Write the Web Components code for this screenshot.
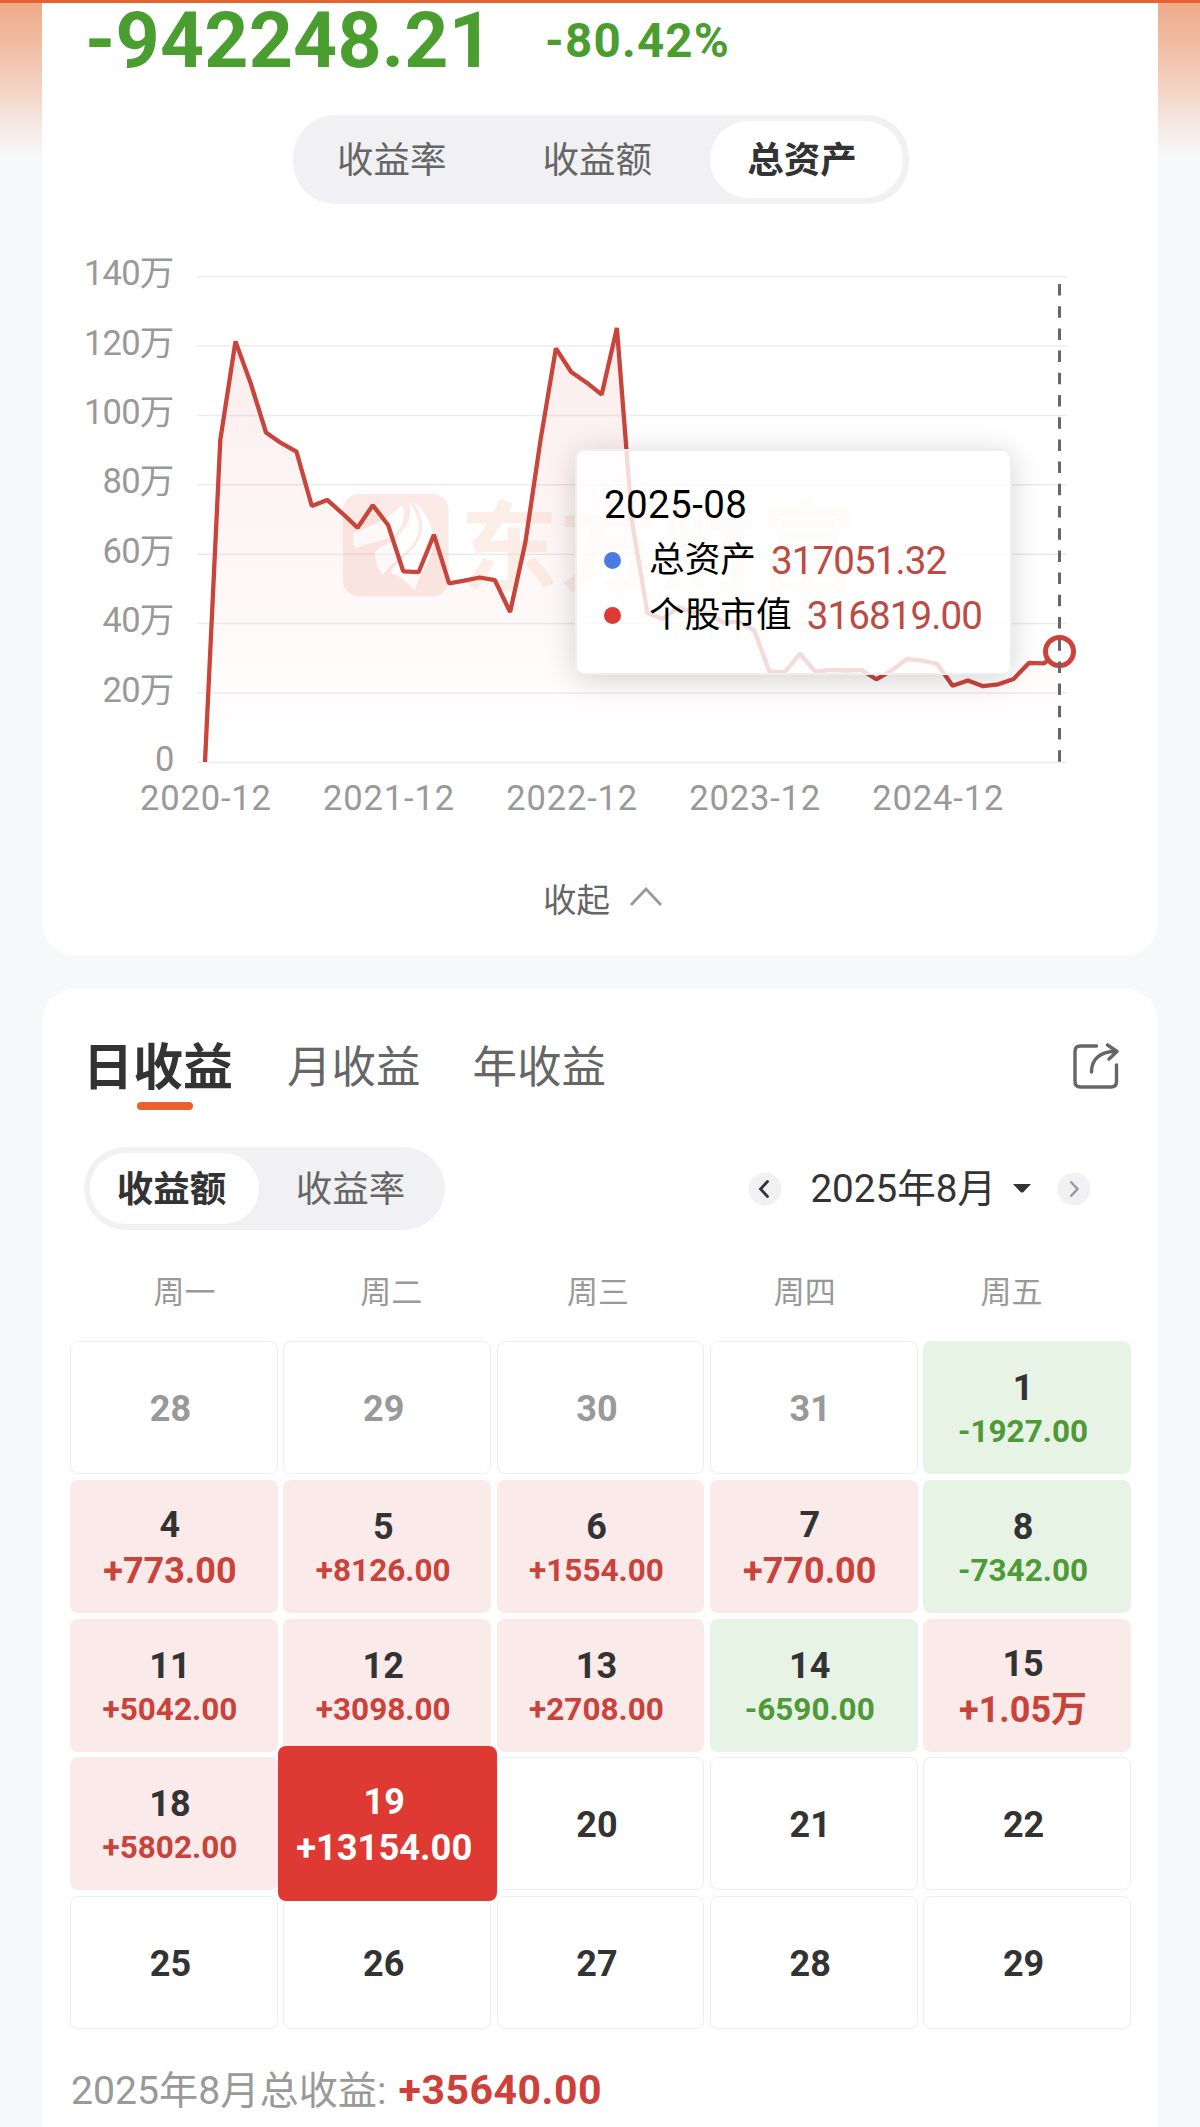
<!DOCTYPE html>
<html lang="zh-CN">
<head>
<meta charset="utf-8">
<title>收益</title>
<style>
  html, body {
    margin: 0;
    padding: 0;
  }
  body {
    height: 2127px;
    overflow: hidden;
    background: #f7f8fa;
    font-family: Roboto, "Noto Sans CJK SC", sans-serif;
    color: #333;
  }
</style>
</head>
<body>
<profit-page>
  <profit-card first>
    <profit-total amount="-942248.21" rate="-80.42%"></profit-total>
    <segment-control size="large" items="收益率,收益额,总资产" active="2"></segment-control>
    <asset-chart></asset-chart>
    <collapse-toggle>收起</collapse-toggle>
  </profit-card>
  <profit-card>
    <period-tabs></period-tabs>
    <calendar-toolbar month="2025年8月">
      <segment-control items="收益额,收益率" active="0"></segment-control>
    </calendar-toolbar>
    <profit-calendar></profit-calendar>
    <month-summary amount="+35640.00">2025年8月总收益:</month-summary>
  </profit-card>
</profit-page>

<script>
"use strict";

class ProfitPage extends HTMLElement {
  constructor() {
    super();
    this.attachShadow({ mode: "open" });
    this.shadowRoot.innerHTML = `
      <style>
        :host {
          display: flex;
          flex-direction: column;
          gap: 34px;
          box-sizing: border-box;
          height: 2152px;
          padding: 0 42px;
          background: linear-gradient(to bottom, #efa886 0, #f3c9b5 70px, #f6ebe7 130px, #f7f8fa 155px);
        }
        #strip {
          position: absolute;
          top: 0;
          left: 0;
          width: 100%;
          height: 3px;
          background: #e8622f;
        }
      </style>
      <slot></slot>
      <div id="strip"></div>
    `;
  }
}

class ProfitCard extends HTMLElement {
  constructor() {
    super();
    this.attachShadow({ mode: "open" });
    this.shadowRoot.innerHTML = `
      <style>
        :host {
          display: flex;
          flex-direction: column;
          flex: 1;
          background: #fff;
          border-radius: 32px;
        }
        :host([first]) {
          flex: none;
          height: 955px;
          border-radius: 0 0 32px 32px;
        }
      </style>
      <slot></slot>
    `;
  }
}

class ProfitTotal extends HTMLElement {
  constructor() {
    super();
    this.attachShadow({ mode: "open" });
    this.shadowRoot.innerHTML = `
      <style>
        :host {
          display: flex;
          align-items: center;
          gap: 52px;
          height: 83px;
          padding-left: 43px;
          color: #4a9d2f;
          font-weight: 700;
          white-space: nowrap;
        }
        #amount { font-size: 77px; line-height: 83px; letter-spacing: 0.2px; }
        #rate { font-size: 47.5px; line-height: 83px; letter-spacing: 1.2px; }
      </style>
      <span id="amount">${this.getAttribute("amount")}</span>
      <span id="rate">${this.getAttribute("rate")}</span>
    `;
  }
}

class SegmentControl extends HTMLElement {
  constructor() {
    super();
    this.attachShadow({ mode: "open" });
    const active = Number(this.getAttribute("active"));
    const buttons = this.getAttribute("items")
      .split(",")
      .map((text, i) => `<span class="${i === active ? "on" : ""}">${text}</span>`)
      .join("");
    this.shadowRoot.innerHTML = `
      <style>
        :host {
          display: flex;
          box-sizing: border-box;
          width: 361px;
          height: 83px;
          padding: 6px;
          border-radius: 42px;
          background: #f1f1f4;
        }
        :host([size="large"]) {
          width: 616px;
          height: 89px;
          align-self: center;
          margin: 32px 0 0 2px;
        }
        span {
          flex: 1 1 0;
          display: flex;
          align-items: center;
          justify-content: center;
          box-sizing: border-box;
          padding: 3px 0 0 3px;
          border-radius: 40px;
          font-size: 36.5px;
          line-height: 40px;
          color: #666;
        }
        :host([size="large"]) span { padding: 3px 20px 0 0; }
        .on {
          flex: 0 0 169px;
          padding: 3px 6px 0 0;
          background: #fff;
          color: #333;
          font-weight: 700;
        }
        :host([size="large"]) .on { flex: 0 0 193px; padding-right: 9px; }
      </style>
      ${buttons}
    `;
  }
}

// y position of every month from 2020-12 to 2025-08
const ASSET_LINE = [
  762, 439.8, 341.4, 383.5, 432.5, 443.2, 451.6, 506, 499.9, 513.3, 527.8, 505.2,
  525, 571.4, 572.2, 534.7, 583.3, 580.6, 577.5, 580.2, 612, 542.3, 439, 348.3,
  372, 382.4, 394.6, 328, 523, 613, 619, 607.4, 612, 613, 622.7, 621.6,
  630.4, 672, 672, 653.7, 671.7, 669.8, 670.5, 669.8, 679.3, 670.5, 659, 660.6,
  664, 685.8, 680.5, 686.2, 684.3, 679, 662.9, 663.3, 651.4
];

class AssetChart extends HTMLElement {
  constructor() {
    super();
    this.attachShadow({ mode: "open" });
    const step = 15.257;
    const points = ASSET_LINE.map((y, i) => `${(205 + i * step).toFixed(1)},${y}`).join(" ");

    let grid = "";
    for (let i = 0; i <= 7; i++) {
      const y = 762.4 - i * 69.4;
      const label = i === 0 ? "0" : `${i * 20}万`;
      grid += `<line x1="197" x2="1067" y1="${y}" y2="${y}"/>`;
      grid += `<text class="amount" x="173.5" y="${y + 8.5}" text-anchor="end">${label}</text>`;
    }
    const years = [2020, 2021, 2022, 2023, 2024]
      .map((year, i) => `<text x="${205.5 + i * 12 * step}" y="810" text-anchor="middle" textLength="131">${year}-12</text>`)
      .join("");

    this.shadowRoot.innerHTML = `
      <style>
        :host {
          display: block;
          position: relative;
          height: 640px;
        }
        svg { display: block; }
        .axis text { font-size: 34.5px; fill: #999; }
        .axis .amount { letter-spacing: -0.8px; }
        .axis line { stroke: #ececee; stroke-width: 1.5; }
        .mark { font-size: 98px; font-weight: 700; fill: #f5cdb8; }
        #tip {
          position: absolute;
          left: 533px;
          top: 245px;
          box-sizing: border-box;
          width: 437px;
          height: 226px;
          padding: 26px 0 0 27px;
          border: 2px solid #eee;
          border-radius: 9px;
          background: rgba(255, 255, 255, 0.8);
          box-shadow: 0 4px 30px rgba(0, 0, 0, 0.17);
          color: #000;
          font-size: 38.5px;
          line-height: 55.5px;
          white-space: nowrap;
        }
        #date { letter-spacing: 0.4px; }
        .row { display: flex; align-items: center; }
        .row i {
          width: 17px;
          height: 17px;
          margin-right: 28px;
          border-radius: 50%;
          background: #4a7be0;
        }
        .row i.red { background: #dc3a32; }
        .name { font-size: 35.7px; margin-right: 15px; }
        .value { color: #bb4b43; letter-spacing: -0.9px; }
      </style>
      <svg width="1116" height="640" viewBox="42 204 1116 640">
        <defs>
          <linearGradient id="fill" x1="0" y1="328" x2="0" y2="762" gradientUnits="userSpaceOnUse">
            <stop offset="0" stop-color="#dc3a32" stop-opacity="0.09"/>
            <stop offset="1" stop-color="#dc3a32" stop-opacity="0"/>
          </linearGradient>
        </defs>
        <g class="axis">${grid}${years}</g>
        <polygon points="${points} 1059.4,762 205,762" fill="url(#fill)"/>
        <g opacity="0.33">
          <rect x="343" y="494" width="105.500" height="102.500" rx="16" fill="#f2bdae"/>
          <g fill="#fff">
            <path d="M353 533C364 529 388 520 402 505C406 516 403 526 396 533C386 543 370 541 355 549Q352 541 353 533Z"/>
            <path d="M375 553C381 543 393 544 402 532C410 521 412 514 409 502C418 514 422 527 416 539C409 553 393 560 383 575Q375 565 375 553Z"/>
            <path d="M390 573C397 559 411 555 419 540C425 527 422 514 414 503C424 508 431 523 433 536C436 559 420 570 415 591C407 582 400 576 390 573Z"/>
          </g>
          <text class="mark" x="460" y="583" textLength="397">东方财富</text>
        </g>
        <polyline points="${points}" fill="none" stroke="#c9453c" stroke-width="4.300" stroke-linejoin="bevel"/>
        <circle cx="1059.500" cy="651.500" r="14" fill="#fff" stroke="#cf4038" stroke-width="5"/>
        <line x1="1059.500" x2="1059.500" y1="284" y2="762" stroke="#666" stroke-width="3" stroke-dasharray="11.500 10.700"/>
      </svg>
      <div id="tip">
        <div id="date">2025-08</div>
        <div class="row"><i></i><span class="name">总资产</span><span class="value">317051.32</span></div>
        <div class="row"><i class="red"></i><span class="name">个股市值</span><span class="value">316819.00</span></div>
      </div>
    `;
  }
}

class CollapseToggle extends HTMLElement {
  constructor() {
    super();
    this.attachShadow({ mode: "open" });
    this.shadowRoot.innerHTML = `
      <style>
        :host {
          display: flex;
          align-items: center;
          justify-content: center;
          gap: 20px;
          height: 106px;
          padding-left: 5px;
          font-size: 33.5px;
          color: #666;
        }
      </style>
      <slot></slot>
      <svg width="32" height="20" viewBox="0 0 32 20" fill="none" stroke="#999" stroke-width="2.800">
        <path d="M1 18L16 2l15 16"/>
      </svg>
    `;
  }
}

class PeriodTabs extends HTMLElement {
  constructor() {
    super();
    this.attachShadow({ mode: "open" });
    this.shadowRoot.innerHTML = `
      <style>
        :host {
          display: flex;
          align-items: center;
          height: 158px;
          padding: 0 39px 0 41px;
          font-size: 44.5px;
          line-height: 60px;
          color: #666;
        }
        span { margin-right: 52px; }
        .on {
          position: relative;
          margin-right: 54px;
          font-size: 50px;
          font-weight: 700;
          color: #333;
        }
        .on::after {
          content: "";
          position: absolute;
          left: 54px;
          top: 64px;
          width: 56px;
          height: 8px;
          border-radius: 4px;
          background: #e8622f;
        }
        svg { margin: 0 0 5px auto; }
      </style>
      <span class="on">日收益</span>
      <span>月收益</span>
      <span>年收益</span>
      <svg width="46" height="46" viewBox="0 0 46 46" fill="none" stroke="#666" stroke-width="3.400" stroke-linecap="round" stroke-linejoin="round">
        <path d="M23.500 3H7.500Q2 3 2 8.500V38.500Q2 44 7.500 44H38Q43.500 44 43.500 38.500V22"/>
        <path d="M18.500 29C18.500 16.500 27 8.500 42 8.500M34.500 2L44 8.500L36 16"/>
      </svg>
    `;
  }
}

class CalendarToolbar extends HTMLElement {
  constructor() {
    super();
    this.attachShadow({ mode: "open" });
    this.shadowRoot.innerHTML = `
      <style>
        :host {
          display: flex;
          align-items: center;
          justify-content: space-between;
          height: 83px;
          padding: 0 67px 0 42px;
        }
        nav { display: flex; align-items: center; }
        #month { margin: 0 17px 0 28px; font-size: 38.6px; line-height: 50px; }
        #next { margin-left: 26px; }
      </style>
      <slot></slot>
      <nav>
        <svg width="34" height="34" viewBox="0 0 34 34" fill="none">
          <circle cx="17" cy="17" r="16.500" fill="#f1f1f4"/>
          <path d="M19.500 9.500l-7 7.500 7 7.500" stroke="#333" stroke-width="2.800" stroke-linecap="round"/>
        </svg>
        <span id="month">${this.getAttribute("month")}</span>
        <svg width="18" height="10" viewBox="0 0 18 10"><path d="M0 0h18l-7.500 8q-1.500 1.200-3 0z" fill="#333"/></svg>
        <svg id="next" width="34" height="34" viewBox="0 0 34 34" fill="none">
          <circle cx="17" cy="17" r="16.500" fill="#f1f1f4"/>
          <path d="M13.500 9.500l7 7.500-7 7.500" stroke="#999" stroke-width="2.500"/>
        </svg>
      </nav>
    `;
  }
}

class DayCell extends HTMLElement {
  constructor() {
    super();
    this.attachShadow({ mode: "open" });
    this.shadowRoot.innerHTML = `
      <style>
        :host {
          display: flex;
          flex-direction: column;
          align-items: center;
          box-sizing: border-box;
          padding: 26px 8px 0 0;
          border-radius: 8px;
          font-size: 36px;
          font-weight: 700;
          line-height: 42px;
          color: #333;
        }
        :host([kind="idle"]), :host([kind="past"]) {
          padding: 46px 7px 0 0;
          border: 1.5px solid #eee;
        }
        :host([kind="past"]) { color: #999; }
        :host([kind="up"]) { background: #faeae9; }
        :host([kind="down"]) { background: #e7f3e5; }
        :host([kind="today"]) {
          z-index: 1;
          margin: -11px -6px -11px -5px;
          padding: 35px 7px 0 0;
          background: #de3a33;
          color: #fff;
        }
        #sum { margin-top: 2px; font-size: 31.5px; }
        :host([wide]) { padding-top: 24px; }
        :host([wide]) #sum { margin-top: 4px; font-size: 36px; }
        :host([kind="today"]) #sum { margin-top: 4px; font-size: 36.3px; }
        :host([kind="up"]) #sum { color: #c9433b; }
        :host([kind="down"]) #sum { color: #4e9a38; }
      </style>
      <slot></slot>
      <span id="sum"></span>
    `;
  }

  connectedCallback() {
    this.shadowRoot.querySelector("#sum").textContent = this.getAttribute("sum") || "";
  }
}

const DAYS = [
  [28, "past"], [29, "past"], [30, "past"], [31, "past"], [1, "down", "-1927.00"],
  [4, "up", "+773.00"], [5, "up", "+8126.00"], [6, "up", "+1554.00"], [7, "up", "+770.00"], [8, "down", "-7342.00"],
  [11, "up", "+5042.00"], [12, "up", "+3098.00"], [13, "up", "+2708.00"], [14, "down", "-6590.00"], [15, "up", "+1.05万"],
  [18, "up", "+5802.00"], [19, "today", "+13154.00"], [20, "idle"], [21, "idle"], [22, "idle"],
  [25, "idle"], [26, "idle"], [27, "idle"], [28, "idle"], [29, "idle"]
];

class ProfitCalendar extends HTMLElement {
  constructor() {
    super();
    this.attachShadow({ mode: "open" });
    const cells = DAYS.map(([day, kind, sum = ""]) => {
      const wide = kind === "up" && sum.length < 8 ? "wide" : "";
      return `<day-cell kind="${kind}" sum="${sum}" ${wide}>${day}</day-cell>`;
    }).join("");
    this.shadowRoot.innerHTML = `
      <style>
        :host { display: block; }
        #week {
          display: grid;
          grid-template-columns: repeat(5, 1fr);
          height: 111px;
          box-sizing: border-box;
          padding: 7px 43px 0 39px;
          align-items: center;
          text-align: center;
          font-size: 31px;
          color: #999;
        }
        #days {
          display: grid;
          grid-template-columns: repeat(5, 1fr);
          grid-auto-rows: 133px;
          gap: 5.75px 5.4px;
          padding: 0 27px 0 28px;
        }
      </style>
      <div id="week"><span>周一</span><span>周二</span><span>周三</span><span>周四</span><span>周五</span></div>
      <div id="days">${cells}</div>
    `;
  }
}

class MonthSummary extends HTMLElement {
  constructor() {
    super();
    this.attachShadow({ mode: "open" });
    this.shadowRoot.innerHTML = `
      <style>
        :host {
          display: flex;
          align-items: baseline;
          gap: 12px;
          margin-top: 36px;
          padding-left: 29px;
          font-size: 39.2px;
          line-height: 50px;
          color: #999;
        }
        b { font-size: 41px; letter-spacing: 0.5px; color: #d0403a; }
      </style>
      <span><slot></slot></span>
      <b>${this.getAttribute("amount")}</b>
    `;
  }
}

customElements.define("profit-page", ProfitPage);
customElements.define("profit-card", ProfitCard);
customElements.define("profit-total", ProfitTotal);
customElements.define("segment-control", SegmentControl);
customElements.define("asset-chart", AssetChart);
customElements.define("collapse-toggle", CollapseToggle);
customElements.define("period-tabs", PeriodTabs);
customElements.define("calendar-toolbar", CalendarToolbar);
customElements.define("day-cell", DayCell);
customElements.define("profit-calendar", ProfitCalendar);
customElements.define("month-summary", MonthSummary);
</script>
</body>
</html>
